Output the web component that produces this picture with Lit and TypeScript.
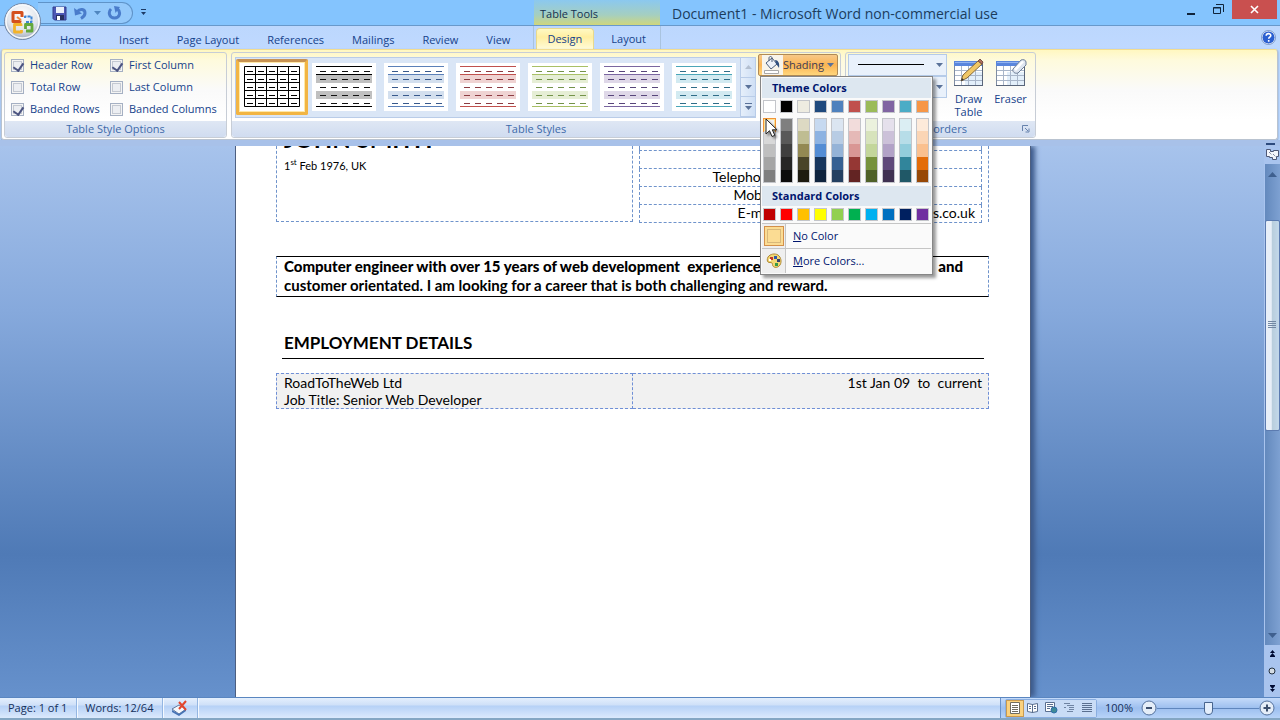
import { LitElement, html, svg, css } from "lit";
import { customElement, state } from "lit/decorators.js";
import { classMap } from "lit/directives/class-map.js";
import { styleMap } from "lit/directives/style-map.js";

const TABS = ["Home", "Insert", "Page Layout", "References", "Mailings", "Review", "View"];
const CONTEXT_TABS = ["Design", "Layout"];

const OPTIONS = [
  { id: "header-row", label: "Header Row", on: true },
  { id: "first-col", label: "First Column", on: true },
  { id: "total-row", label: "Total Row", on: false },
  { id: "last-col", label: "Last Column", on: false },
  { id: "banded-rows", label: "Banded Rows", on: true },
  { id: "banded-cols", label: "Banded Columns", on: false },
];

const STYLES = [
  { name: "Table Grid", line: "#000", dash: "#000", band: "none", grid: true },
  { name: "Light Shading", line: "#000", dash: "#111", band: "#c0c0c0", heavy: true },
  { name: "Light Shading - Accent 1", line: "#5b80b8", dash: "#38598c", band: "#d3dfee" },
  { name: "Light Shading - Accent 2", line: "#c0504d", dash: "#8c3c42", band: "#efd3d2" },
  { name: "Light Shading - Accent 3", line: "#a9c066", dash: "#74934a", band: "#e6eed5" },
  { name: "Light Shading - Accent 4", line: "#7a66a0", dash: "#57457a", band: "#dfd8e8" },
  { name: "Light Shading - Accent 5", line: "#4ba6b8", dash: "#2f6d88", band: "#d2eaf1" },
];

const THEME = ["#ffffff", "#000000", "#eeece1", "#1f497d", "#4f81bd", "#c0504d", "#9bbb59", "#8064a2", "#4bacc6", "#f79646"];
const TINTS = [
  ["#f2f2f2", "#d8d8d8", "#bfbfbf", "#a5a5a5", "#7f7f7f"],
  ["#7f7f7f", "#595959", "#3f3f3f", "#262626", "#0c0c0c"],
  ["#ddd9c3", "#bfbd92", "#938953", "#494429", "#1d1b10"],
  ["#c6d9f0", "#8db3e2", "#548dd4", "#17365d", "#0f243e"],
  ["#dbe5f1", "#b8cce4", "#95b3d7", "#366092", "#244061"],
  ["#f2dcdb", "#e5b9b7", "#d99694", "#953734", "#632423"],
  ["#ebf1dd", "#d7e3bc", "#c3d69b", "#76923c", "#4f6128"],
  ["#e5e0ec", "#ccc1d9", "#b2a2c7", "#5f497a", "#3f3151"],
  ["#dbeef3", "#b7dde8", "#92cddc", "#31859b", "#205867"],
  ["#fdeada", "#fbd5b5", "#fac08f", "#e36c09", "#974806"],
];
const STANDARD = ["#c00000", "#ff0000", "#ffc000", "#ffff00", "#92d050", "#00b050", "#00b0f0", "#0070c0", "#002060", "#7030a0"];

const arrow = (fill = "#5a7299") => svg`<svg class="arrow" width="7" height="4" viewBox="0 0 7 4"><path d="M0 0h7L3.500 4z" fill=${fill} /></svg>`;

function tableThumb(s: any) {
  const rows = [0, 1, 2, 3, 4];
  if (s.grid) {
    return svg`<svg width="56" height="42" viewBox="0 0 56 42" fill="none" stroke="#000">
      <path d="M.5 .5h55v40h-55zM11.500 .5v40M22.500 .5v40M33.500 .5v40M44.500 .5v40M.5 8.500h55M.5 16.500h55M.5 24.500h55M.5 32.500h55" />
      <path d="M3 5.500h51M3 13.500h51M3 21.500h51M3 29.500h51M3 37.500h51" stroke-dasharray="6 5" />
    </svg>`;
  }
  return svg`<svg width="56" height="42" viewBox="0 0 56 42" fill="none">
    <path d="M0 9h56v8H0zM0 25h56v8H0z" fill=${s.band} />
    <path d="M0 .5h56M0 8.500h56M0 40.500h56" stroke=${s.line} />
    ${rows.map((r) => svg`<path d=${`M4 ${r * 8 + 5}.500h51`} stroke=${s.dash} stroke-dasharray="6 5" />`)}
  </svg>`;
}

const gridIcon = (tool: unknown) => svg`<svg width="32" height="30" viewBox="0 0 32 30">
  <rect x="1.500" y="3.500" width="28" height="24" fill="#f3f8fd" stroke="#7f8ca3" />
  <path d="M2 8h27v19H2z" fill="#fff" /><path d="M12 14h17v13H12z" fill="#e3effa" />
  <path d="M8.500 8v19M15.500 8v19M22.500 8v19M2 12.500h27M2 17.500h27M2 22.500h27" stroke="#a9b6c9" />
  <path d="M1 3h29v5H1z" fill="#5a86dc" /><path d="M2 4h27v1H2z" fill="#92b3f0" />
  <path d="M1 27.500h29M29.500 5v23" stroke="#59657a" />
  ${tool}
</svg>`;

@customElement("app-root")
export class AppRoot extends LitElement {
  @state() private active = "Design";

  static styles = css`
    :host {
      display: flex;
      flex-direction: column;
      height: 100vh;
      overflow: hidden;
      font: 11px/14px "Open Sans", "Noto Sans", sans-serif;
      color: #1e395b;
      background: #bfdbff;
      position: relative;
    }
    * { box-sizing: border-box; }
    button {
      font: inherit;
      color: inherit;
      background: none;
      border: 0;
      padding: 0;
      margin: 0;
      display: flex;
      align-items: center;
      justify-content: center;
    }
    svg { display: block; flex: none; }
    h1, h2, p { margin: 0; }

    .titlebar {
      display: flex;
      height: 26px;
      flex: none;
      background: #84c4fe;
      border-bottom: 1px solid #6899cb;
    }
    .office { position: absolute; left: 3px; top: 2px; z-index: 2; }
    .quick {
      display: flex;
      align-items: center;
      gap: 6px;
      height: 22px;
      margin: 2px 0 0 38px;
      padding: 0 12px 0 14px;
      width: 95px;
      border: 1px solid #5f93c8;
      border-left: 0;
      border-radius: 0 12px 12px 0;
      background: #94c9fb;
    }
    .quick-more { width: 20px; }
    .tools-title {
      width: 126px;
      margin-left: 381px;
      padding-left: 6px;
      line-height: 28px;
      color: #15314f;
      background: linear-gradient(#8bc8ef, #a5cfc0 60%, #cfd67c);
    }
    .doc-title {
      flex: 1;
      padding-left: 12px;
      font-size: 14px;
      line-height: 27px;
      color: #1c3c5c;
      white-space: nowrap;
    }
    .window { display: flex; height: 19px; }
    .window button { width: 27px; }
    .window .close { width: 45px; background: #c9504f; margin-right: 3px; }

    .tabs {
      display: flex;
      flex: none;
      height: 23px;
      padding-left: 46px;
      background: linear-gradient(#bcd7fd, #bfd9ff);
      color: #15428b;
    }
    .tab { padding: 3px 13px 0; border: 1px solid transparent; border-bottom: 0; white-space: nowrap; }
    .tab.context { margin-top: 2px; padding: 0 16px; }
    .tab.context:first-child { padding: 0 11px 0 10px; }
    .tab.on { background: linear-gradient(#fff9c4, #ffeea0 40%, #fffbd8); border-color: #e8d98c; border-radius: 4px 4px 0 0; }
    .context-set {
      display: flex;
      width: 128px;
      margin-left: 9px;
      padding-left: 2px;
      border-left: 1px solid #a9c3df;
      border-right: 1px solid #a9c3df;
    }
    .help { margin: 0 4px 0 auto; }

    .ribbon {
      display: flex;
      flex: none;
      gap: 4px;
      height: 91px;
      margin: 0 2px 0 1px;
      padding: 2px 2px 1px;
      border: 1px solid #b9c3d0;
      border-top-color: #f3dd8f;
      border-radius: 3px;
      background: linear-gradient(#fff7c0, #fefadc 10px, #fafafa 40px, #ffffff 70px);
      box-shadow: 0 1px 2px #6d8dbd;
    }
    .group { display: flex; flex-direction: column; border: 1px solid #c7cdd6; border-radius: 3px; }
    .group-body { flex: 1; display: flex; }
    .group-label {
      display: flex;
      height: 16px;
      align-items: center;
      justify-content: center;
      color: #3e6aaa;
      background: linear-gradient(#dfe7f4, #d0dcf0);
      border-radius: 0 0 3px 3px;
    }
    .group-label .name { flex: 1; text-align: center; }
    .launcher { width: 18px; }
    .options {
      display: grid;
      grid-template-columns: 99px 112px;
      grid-auto-rows: 22px;
      padding: 1px 4px 0 6px;
    }
    .options label { display: flex; align-items: center; gap: 6px; white-space: nowrap; color: #15428b; }
    .check {
      appearance: none;
      width: 13px;
      height: 13px;
      margin: 0;
      border: 1px solid #a5b0c3;
      box-shadow: inset 0 0 0 1px #f4f4f4, inset 0 0 0 2px #c4c9d2;
      background: #eceef2;
      position: relative;
    }
    .check:checked::after {
      content: "";
      position: absolute;
      left: 3px;
      top: 1px;
      width: 5px;
      height: 8px;
      border: solid #4c5480;
      border-width: 0 2px 2px 0;
      transform: rotate(35deg);
    }
    .gallery { display: flex; height: 61px; margin: 4px 2px 0 3px; border: 1px solid #b9cce8; background: #dae6f6; }
    .gallery .pick { width: 64px; height: 48px; background: #fff; margin: 5px 4px 0; }
    .gallery .pick.on {
      width: 72px;
      height: 56px;
      margin: 1px 0 0;
      border: 3px solid #f2b544;
      border-top-color: #c79252;
      box-shadow: inset 0 0 0 1px #ffe9a8;
      border-radius: 2px;
    }
    .scroll { display: flex; flex-direction: column; width: 15px; border-left: 1px solid #b9cce8; }
    .scroll button { flex: 1; flex-direction: column; gap: 2px; border-bottom: 1px solid #b9cce8; background: linear-gradient(90deg, #e6effa, #cfdff5); }
    .shading { height: 22px; width: 80px; margin-top: 1px; border: 1px solid #b08a55; border-radius: 2px; background: linear-gradient(#f7c989, #fbb453 50%, #ffd67c); color: #3d3b55; }
    .shading .arrow { margin-left: 3px; }
    .shading .bucket { background: #f8f4ea; height: 20px; width: 21px; display: flex; align-items: center; }
    .shade-col { width: 82px; }

    .borders .group-body { padding: 1px 4px 0 2px; gap: 1px; }
    .combos { width: 99px; }
    .combo { display: block; position: relative; }
    .combo select { appearance: none; display: block; width: 99px; height: 22px; border: 1px solid #b5cbe8; border-radius: 0; background: #e9f1fb; }
    .combo .face { position: absolute; left: 10px; top: 9px; pointer-events: none; }
    .big { width: 41px; flex-direction: column; justify-content: flex-start; padding-top: 4px; line-height: 13px; color: #15428b; gap: 4px; }

    .strip { flex: none; display: flex; justify-content: flex-end; align-items: flex-end; height: 6px; padding: 0 5px 1px 0; background: #a8c1e9; }
    .strip i { width: 9px; height: 2px; background: #2d4a7c; }
    .work { display: flex; flex: 1; min-height: 0; background: linear-gradient(#a7c3ec, #86a9dc 30%, #4f7ab6 74%, #6691cc 100%); }
    .canvas { flex: 1; display: flex; justify-content: center; overflow: hidden; padding-left: 2px; }
    .page {
      width: 794px;
      padding: 0 41px 0 40px;
      background: #fff;
      color: #000;
      box-shadow: 0 0 0 1px #4d5f80, 5px 0 5px #3d5a8b;
      font: 14px/18px Lato, "Open Sans", sans-serif;
    }
    .head { display: flex; height: 76px; border-right: 1px dashed #6f93cb; }
    .who { flex: 1; padding-left: 7px; border: 1px dashed #6f93cb; border-top: 0; }
    .who h1 { font-size: 24px; line-height: 24px; margin-top: -19px; }
    .who p { font-size: 11px; line-height: 18px; margin-top: 6px; }
    .who sup { font-size: 8px; line-height: 0; }
    .contact { width: 343px; margin: 0 6px 0 6px; border-collapse: collapse; }
    .contact td, .contact th { height: 18px; padding: 0; line-height: 16px; font-weight: 400; border-bottom: 1px dashed #6f93cb; text-align: right; vertical-align: top; }
    .contact th { width: 140px; border-left: 1px dashed #6f93cb; }
    .contact td { padding-right: 6px; border-right: 1px dashed #6f93cb; }
    .contact .cut th, .contact .cut td { height: 4px; line-height: 0; }
    .summary { margin-top: 34px; padding: 0 25px 0 7px; height: 41px; border: solid #000; border-width: 1px 0; font-size: 15px; font-weight: 700; line-height: 19px; border-left: 1px dashed #6f93cb; border-right: 1px dashed #6f93cb; }
    .summary span { display: flex; justify-content: space-between; white-space: pre; }
    .page h2 { margin: 34px 5px 0 6px; padding: 0 2px 3px; font-size: 17px; line-height: 24px; border-bottom: 1px solid #000; }
    .job { width: 100%; margin-top: 14px; border-collapse: collapse; background: #f1f1f1; }
    .job td { width: 50%; padding: 0 7px; line-height: 17px; border: 1px dashed #6f8fd6; vertical-align: top; white-space: pre; }
    .job .when { text-align: right; padding-right: 6px; }

    .vscroll { display: flex; flex-direction: column; align-items: center; width: 16px; background: #a9c4ee; }
    .vscroll .split { height: 18px; display: flex; align-items: center; }
    .track { flex: 1; width: 15px; display: flex; flex-direction: column; background: linear-gradient(90deg, #6389bd, #7ea1d2); }
    .track button { height: 20px; }
    .before { flex: 36; }
    .after { flex: 196; }
    .thumb { flex: 211; border: 1px solid #5c7bb0; border-radius: 2px; background: linear-gradient(90deg, #e8eff8 40%, #b9cedd 50%, #c3d8ea); }
    .jump { display: flex; flex-direction: column; justify-content: space-around; width: 15px; height: 52px; }

    .status {
      display: flex;
      flex: none;
      height: 23px;
      border-top: 1px solid #5a86c0;
      border-bottom: 2px solid #84a6c3;
      color: #15305b;
      background: linear-gradient(#e4effd 0, #cfe0f8 7px, #b6d1f6 8px, #dbe9fc);
    }
    .status .item { display: flex; align-items: center; padding: 0 9px 0 8px; border-right: 1px solid #94b6e2; box-shadow: 1px 0 #f4f9ff; }
    .right { display: flex; align-items: center; margin-left: auto; padding: 0 5px 0 4px; border-left: 1px solid #6b93ca; background: linear-gradient(#c5dbfa, #9dbfef 50%, #b7d3f8); }
    .views { display: flex; border: 1px solid #8aaee0; border-radius: 2px; }
    .views button { width: 18px; height: 17px; background: #c9dcf6; }
    .views button.on { background: #fbd27e; outline: 1px solid #c89a50; outline-offset: -1px; }
    .percent { margin: 0 8px; }
    .zoom { appearance: none; width: 102px; height: 16px; margin: 0; background: linear-gradient(#5f86bd, #5f86bd) center / 100% 1px no-repeat; }
    .zoom::-webkit-slider-thumb {
      appearance: none;
      width: 9px;
      height: 13px;
      background: #e4eefb;
      border: 1px solid #48658f;
      border-radius: 1px 1px 5px 5px;
    }

    .menu {
      position: absolute;
      left: 760px;
      top: 76px;
      width: 173px;
      padding: 1px;
      background: #fafafa;
      border: 1px solid #868686;
      box-shadow: 3px 3px 3px #00000066;
      color: #00156e;
      z-index: 3;
    }
    .menu .heading { padding-left: 10px; height: 20px; line-height: 20px; font-weight: 700; background: #dde7f0; }
    .swatches { display: flex; gap: 4px; padding: 2px 1px 0; }
    .sw { width: 13px; height: 13px; border: 1px solid #c3c5ca; }
    .tints { padding: 5px 1px 3px; }
    .tints .col { width: 13px; border: 1px solid #c3c5ca; display: flex; flex-direction: column; }
    .tints .col button { height: 13px; }
    .tints .col button:first-child, .tints .col button:last-child { height: 12px; }
    .tints .col .hot { outline: 1px solid #f29436; box-shadow: inset 0 0 0 1px #ffe294; }
    .standard { padding-bottom: 2px; }
    .entry { width: 100%; height: 25px; justify-content: flex-start; border-top: 1px solid #c5c5c5; }
    .entry .glyph { display: flex; align-items: center; justify-content: center; width: 24px; height: 24px; margin-right: 7px; background: #efefef; border-right: 1px solid #c5c5c5; }
    .chip { width: 20px; height: 20px; background: #fbdc93; border: 1px solid #d3904a; box-shadow: inset 0 0 0 2px #fbdc93, inset 0 0 0 3px #d8b87a; }
    .pointer { position: absolute; left: 4px; top: 41px; filter: drop-shadow(2px 2px 1px #0006); pointer-events: none; }
  `;

  private bars(on: string, inner: unknown, label: string) {
    return html`<button class=${on} aria-label=${label}>${inner}</button>`;
  }

  private sheet() {
    return html`
      <main class="canvas">
        <article class="page">
          <div class="head">
            <div class="who">
              <h1>JOHN SMITH</h1>
              <p>1<sup>st</sup> Feb 1976, UK</p>
            </div>
            <table class="contact">
              <tr class="cut"><th></th><td></td></tr>
              <tr><th></th><td></td></tr>
              <tr><th>Telephone:</th><td></td></tr>
              <tr><th>Mobile:</th><td></td></tr>
              <tr><th>E-mail:</th><td>john@emails.co.uk</td></tr>
            </table>
          </div>
          <p class="summary">
            <span><b>Computer engineer with over 15 years of web development  experience</b><b>and</b></span>
            <span>customer orientated. I am looking for a career that is both challenging and reward.</span>
          </p>
          <h2>EMPLOYMENT DETAILS</h2>
          <table class="job">
            <tr>
              <td>RoadToTheWeb Ltd<br />Job Title: Senior Web Developer</td>
              <td class="when">1st Jan 09  to  current</td>
            </tr>
          </table>
        </article>
      </main>`;
  }

  private menu() {
    return html`
      <div class="menu" role="menu">
        <div class="heading">Theme Colors</div>
        <div class="swatches">
          ${THEME.map((c) => html`<button class="sw" aria-label=${c} style=${styleMap({ background: c })}></button>`)}
        </div>
        <div class="swatches tints">
          ${TINTS.map((col, i) => html`<div class="col">
            ${col.map((c, j) => html`<button class=${classMap({ hot: i === 0 && j === 0 })} aria-label=${c} style=${styleMap({ background: c })}></button>`)}
          </div>`)}
        </div>
        <div class="heading">Standard Colors</div>
        <div class="swatches standard">
          ${STANDARD.map((c) => html`<button class="sw" aria-label=${c} style=${styleMap({ background: c })}></button>`)}
        </div>
        <button class="entry"><span class="glyph"><span class="chip"></span></span><span><u>N</u>o Color</span></button>
        <button class="entry">
          <span class="glyph"><svg width="16" height="16" viewBox="0 0 16 16">
            <path d="M2 4C4 1 9 0 12 2c3 2 4 7 2 10-2 3-6 3-7 1-1-1 0-2-1-3s-3 0-4-1C1 8 1 6 2 4z" fill="#f3d774" stroke="#b08a35" />
            <path d="M4 4h3v3H4z" fill="#c0392b" /><path d="M8 3h3v3H8z" fill="#2c55a8" /><path d="M11 6h3v3h-3z" fill="#343f6e" /><path d="M9 10h3v3H9z" fill="#3a9a46" />
            <path d="M3 6h2v2H3z" fill="#fff" />
          </svg></span><span><u>M</u>ore Colors...</span>
        </button>
        <svg class="pointer" width="14" height="20" viewBox="0 0 14 20"><path d="M1 1v15l3.500-3.300L7 18.500l2.800-1.200-2.500-5.500H12z" fill="#fff" stroke="#222" /></svg>
      </div>`;
  }

  render() {
    return html`
      <header class="titlebar">
        <button class="office" aria-label="Office Button">
          <svg width="39" height="39" viewBox="0 0 39 39">
            <defs><radialGradient id="orb" cx=".5" cy=".3" r=".75"><stop offset="0" stop-color="#fff" /><stop offset=".6" stop-color="#dfe3ea" /><stop offset="1" stop-color="#8f9bb0" /></radialGradient></defs>
            <circle cx="19.500" cy="19.500" r="18" fill="url(#orb)" stroke="#7188a8" />
            <circle cx="19.500" cy="19.500" r="16.500" fill="none" stroke="#f7f9fc" stroke-width="1.500" />
            <g fill="none" stroke-linejoin="round">
              <path d="M17 18.500v1H10V10.500h9V15" stroke="#d4501d" stroke-width="3" />
              <path d="M22 16v-1.500h6.500v5.500H22" stroke="#3f86d6" stroke-width="2" stroke-dasharray="3 1" />
              <path d="M18 24v-1.500H11.500V30h7v-2" stroke="#f3b32b" stroke-width="2.800" />
              <path d="M22.500 27v-4.500h6.500V29h-6" stroke="#63a83c" stroke-width="2.800" />
            </g>
            <path d="M14 15l4 3" stroke="#f08a3c" stroke-width="2" />
          </svg>
        </button>
        <div class="quick">
          <button aria-label="Save"><svg width="15" height="15" viewBox="0 0 15 15"><path d="M1 1h13v13H2.500L1 12.500z" fill="#4c58b5" stroke="#333d8b" /><path d="M4 1h8v6H4z" fill="#eaf0fb" /><path d="M4 9h8v5H4z" fill="#27305f" /><path d="M5 10h3v4H5z" fill="#fff" /></svg></button>
          <button aria-label="Undo"><svg width="15" height="14" viewBox="0 0 15 14"><path d="M4 6c3-4 8-3 8 1 0 2-1.500 4-4 5.500" fill="none" stroke="#4a7ccb" stroke-width="3" /><path d="M1 2l1 7.500 7-2z" fill="#4a7ccb" /></svg></button>
          ${arrow("#4f86bf")}
          <button aria-label="Redo"><svg width="15" height="14" viewBox="0 0 15 14"><path d="M4 3c-3 3-2 9 3.500 9s6.500-6 3-9" fill="none" stroke="#4a7ccb" stroke-width="3" /><path d="M7 0l6 1-4.500 6z" fill="#4a7ccb" /></svg></button>
        </div>
        <button class="quick-more" aria-label="Customize Quick Access Toolbar"><svg width="7" height="7" viewBox="0 0 7 7"><path d="M1 0h5v1H1zM1 3h5L3.500 6z" fill="#1d3b66" /></svg></button>
        <div class="tools-title">Table Tools</div>
        <div class="doc-title">Document1 - Microsoft Word non-commercial use</div>
        <div class="window">
          <button aria-label="Minimize"><svg width="9" height="12"><path d="M0 9h8v2H0z" fill="#10243b" /></svg></button>
          <button aria-label="Restore"><svg width="11" height="11" fill="none" stroke="#10243b"><path d="M.5 3.500h7v6h-7zM.5 4h7M3 .500h7.500V8" /></svg></button>
          <button class="close" aria-label="Close"><svg width="9" height="9" viewBox="0 0 9 9"><path d="M1 1l7 7M8 1L1 8" stroke="#fff" stroke-width="1.600" /></svg></button>
        </div>
      </header>

      <nav class="tabs">
        ${TABS.map((t) => html`<button class=${classMap({ tab: true, on: this.active === t })} @click=${() => (this.active = t)}>${t}</button>`)}
        <div class="context-set">
          ${CONTEXT_TABS.map((t) => html`<button class=${classMap({ tab: true, context: true, on: this.active === t })} @click=${() => (this.active = t)}>${t}</button>`)}
        </div>
        <button class="help" aria-label="Help"><svg width="15" height="15" viewBox="0 0 15 15"><circle cx="7.500" cy="7.500" r="6.500" fill="#2c5fd0" stroke="#e9f1ff" /><circle cx="7.500" cy="7.500" r="7" fill="none" stroke="#4a6aa5" stroke-width=".6" /><path d="M5.200 5.800c0-3 4.600-2.800 4.600-.3 0 1.700-2.100 1.700-2.100 3.300M7.700 10v1.700" fill="none" stroke="#fff" stroke-width="1.600" /></svg></button>
      </nav>

      <section class="ribbon">
        <div class="group">
          <div class="group-body">
            <div class="options">
              ${OPTIONS.map((o) => html`<label for=${o.id}><input class="check" type="checkbox" id=${o.id} .checked=${o.on} />${o.label}</label>`)}
            </div>
          </div>
          <div class="group-label">Table Style Options</div>
        </div>
        <div class="group">
          <div class="group-body">
            <div class="gallery">
              ${STYLES.map((s, i) => html`<button class=${classMap({ pick: true, on: i === 0 })} aria-label=${s.name}>${tableThumb(s)}</button>`)}
              <div class="scroll">
                <button aria-label="Row up"><svg width="7" height="4"><path d="M0 4h7L3.500 0z" fill="#b3bfd0" /></svg></button>
                <button aria-label="Row down">${arrow()}</button>
                <button aria-label="More styles"><svg width="7" height="7"><path d="M0 0h7v1H0zM0 3h7L3.500 7z" fill="#5a7299" /></svg></button>
              </div>
            </div>
            <div class="shade-col">
              <button class="shading">
                <span class="bucket"><svg width="20" height="20" viewBox="0 0 20 20">
                  <path d="M4 8l6-5 5 6-6 5z" fill="#eef2f8" stroke="#4d5f7d" /><path d="M7 6V3c0-2 3-2 3 0v4" fill="none" stroke="#4d5f7d" />
                  <path d="M13 5c3 0 5 3 4 8-1-2-2-3-3-4z" fill="#31507f" /><path d="M2.500 15.500h14v3h-14z" fill="#fff" stroke="#a8a8a8" />
                </svg></span>
                Shading ${arrow()}
              </button>
            </div>
          </div>
          <div class="group-label">Table Styles</div>
        </div>
        <div class="group borders">
          <div class="group-body">
            <div class="combos">
              <label class="combo"><select aria-label="Line Style"></select><svg class="face" width="86" height="5"><path d="M0 1.500h66" stroke="#000" /><path d="M78 0h7l-3.500 4z" fill="#5a7299" /></svg></label>
              <label class="combo"><select aria-label="Line Weight"></select><svg class="face" width="86" height="5"><path d="M78 0h7l-3.500 4z" fill="#5a7299" /></svg></label>
            </div>
            <button class="big">${gridIcon(svg`<path d="M8 23l2-6L25 3l4 3-15 14z" fill="#f0c766" stroke="#86683a" /><path d="M8 23l1-3 2 2z" fill="#333" /><path d="M25 3l2-2 3 3-1 2z" fill="#b0705c" stroke="#7b5148" />`)}<span>Draw<br />Table</span></button>
            <button class="big">${gridIcon(svg`<path d="M18 11l8-9c2-1 5 0 5 2v3l-8 8c-3 1-6-1-5-4z" fill="#dfe6f0" stroke="#6f7f97" /><path d="M19 11l8-8 2 1-8 9z" fill="#fff" />`)}<span>Eraser</span></button>
          </div>
          <div class="group-label"><span class="name">Draw Borders</span><button class="launcher" aria-label="Borders and Shading"><svg width="8" height="8" fill="none" stroke="#6782ad"><path d="M.5 6V.5H6M3 3l3 3M7 3.500V7H3.500" /></svg></button></div>
        </div>
      </section>
      <div class="strip"><i></i></div>

      <div class="work">
        ${this.sheet()}
        <aside class="vscroll">
          <div class="split"><svg width="13" height="12" viewBox="0 0 13 12"><path d="M.5 .5h4v2h3v-1h5v6h-2v3h-4v-2h-3v-1h-3z" fill="#f4f6fb" stroke="#4e5876" /><path d="M3 3l3 3M7 5l3 3" stroke="#4e5876" stroke-dasharray="1 1" /></svg></div>
          <div class="track">
            <button aria-label="Scroll up"><svg width="9" height="5"><path d="M0 5h9L4.500 0z" fill="#3f608f" /></svg></button>
            <div class="before"></div>
            <button class="thumb" aria-label="Scroll position"><svg width="8" height="8" stroke="#7288a3"><path d="M0 .5h8M0 2.500h8M0 4.500h8M0 6.500h8" /></svg></button>
            <div class="after"></div>
            <button aria-label="Scroll down"><svg width="9" height="5"><path d="M0 0h9L4.500 5z" fill="#3f608f" /></svg></button>
          </div>
          <div class="jump">
            <button aria-label="Previous page"><svg width="5" height="7"><path d="M0 3h5L2.500 0zM0 6h5L2.500 3zM0 6h5v1H0z" fill="#000b33" /></svg></button>
            <button aria-label="Browse object"><svg width="8" height="8"><circle cx="4" cy="4" r="3" fill="#d5dde5" stroke="#22303f" /></svg></button>
            <button aria-label="Next page"><svg width="5" height="7"><path d="M0 4h5L2.500 7zM0 1h5L2.500 4zM0 0h5v1H0z" fill="#000b33" /></svg></button>
          </div>
        </aside>
      </div>

      <footer class="status">
        <span class="item">Page: 1 of 1</span>
        <span class="item">Words: 12/64</span>
        <button class="item" aria-label="Proofing errors"><svg width="17" height="16" viewBox="0 0 17 16"><path d="M1 9l7-4 7 4-7 5z" fill="#f4f7fb" stroke="#62789d" /><path d="M1 10v2l7 4 7-5V9l-7 5z" fill="#4572b4" /><path d="M8 2l7 8M15 1L8 9" stroke="#e2452c" stroke-width="2" /></svg></button>
        <div class="right">
          <div class="views">
            ${this.bars("on", svg`<svg width="12" height="12" fill="#fff" stroke="#6f6c60"><path d="M1.500 .5h9v11h-9zM3 3.500h6M3 5.500h6M3 7.500h6M3 9.500h6" /></svg>`, "Print Layout")}
            ${this.bars("", svg`<svg width="12" height="12" fill="#fff" stroke="#5a6f8f"><path d="M.5 1.500l5 1 5-1v8l-5 1-5-1zM5.500 2v9M2 4.500h2M2 6.500h2M7 4.500h2M7 6.500h2" /></svg>`, "Full Screen Reading")}
            ${this.bars("", svg`<svg width="13" height="12" fill="#fff" stroke="#5a6f8f"><path d="M.5 .5h9v9h-9zM2 2.500h6M2 4.500h6M2 6.500h3" /><circle cx="9" cy="8" r="3" fill="#3f8a98" stroke="#2f6ea8" /></svg>`, "Web Layout")}
            ${this.bars("", svg`<svg width="12" height="12" fill="none" stroke="#6f84a3"><path d="M1 1.500h6M4 3.500h7M6 5.500h5M6 7.500h5M4 9.500h6M1 5.500h2" /></svg>`, "Outline")}
            ${this.bars("", svg`<svg width="12" height="12" fill="none" stroke="#5a6f8f"><path d="M1 1.500h10M1 3.500h10M1 5.500h10M1 7.500h10M1 9.500h10" /></svg>`, "Draft")}
          </div>
          <span class="percent">100%</span>
          <button aria-label="Zoom out"><svg width="16" height="16"><circle cx="8" cy="8" r="7" fill="#e4edf8" stroke="#54719d" /><path d="M5 8h6" stroke="#3c4f6e" stroke-width="2" /></svg></button>
          <input class="zoom" type="range" aria-label="Zoom" min="0" max="100" value="50" />
          <button aria-label="Zoom in"><svg width="16" height="16"><circle cx="8" cy="8" r="7" fill="#e4edf8" stroke="#54719d" /><path d="M4.500 8h7M8 4.500v7" stroke="#3c4f6e" stroke-width="2" /></svg></button>
        </div>
      </footer>
      ${this.menu()}
    `;
  }
}
